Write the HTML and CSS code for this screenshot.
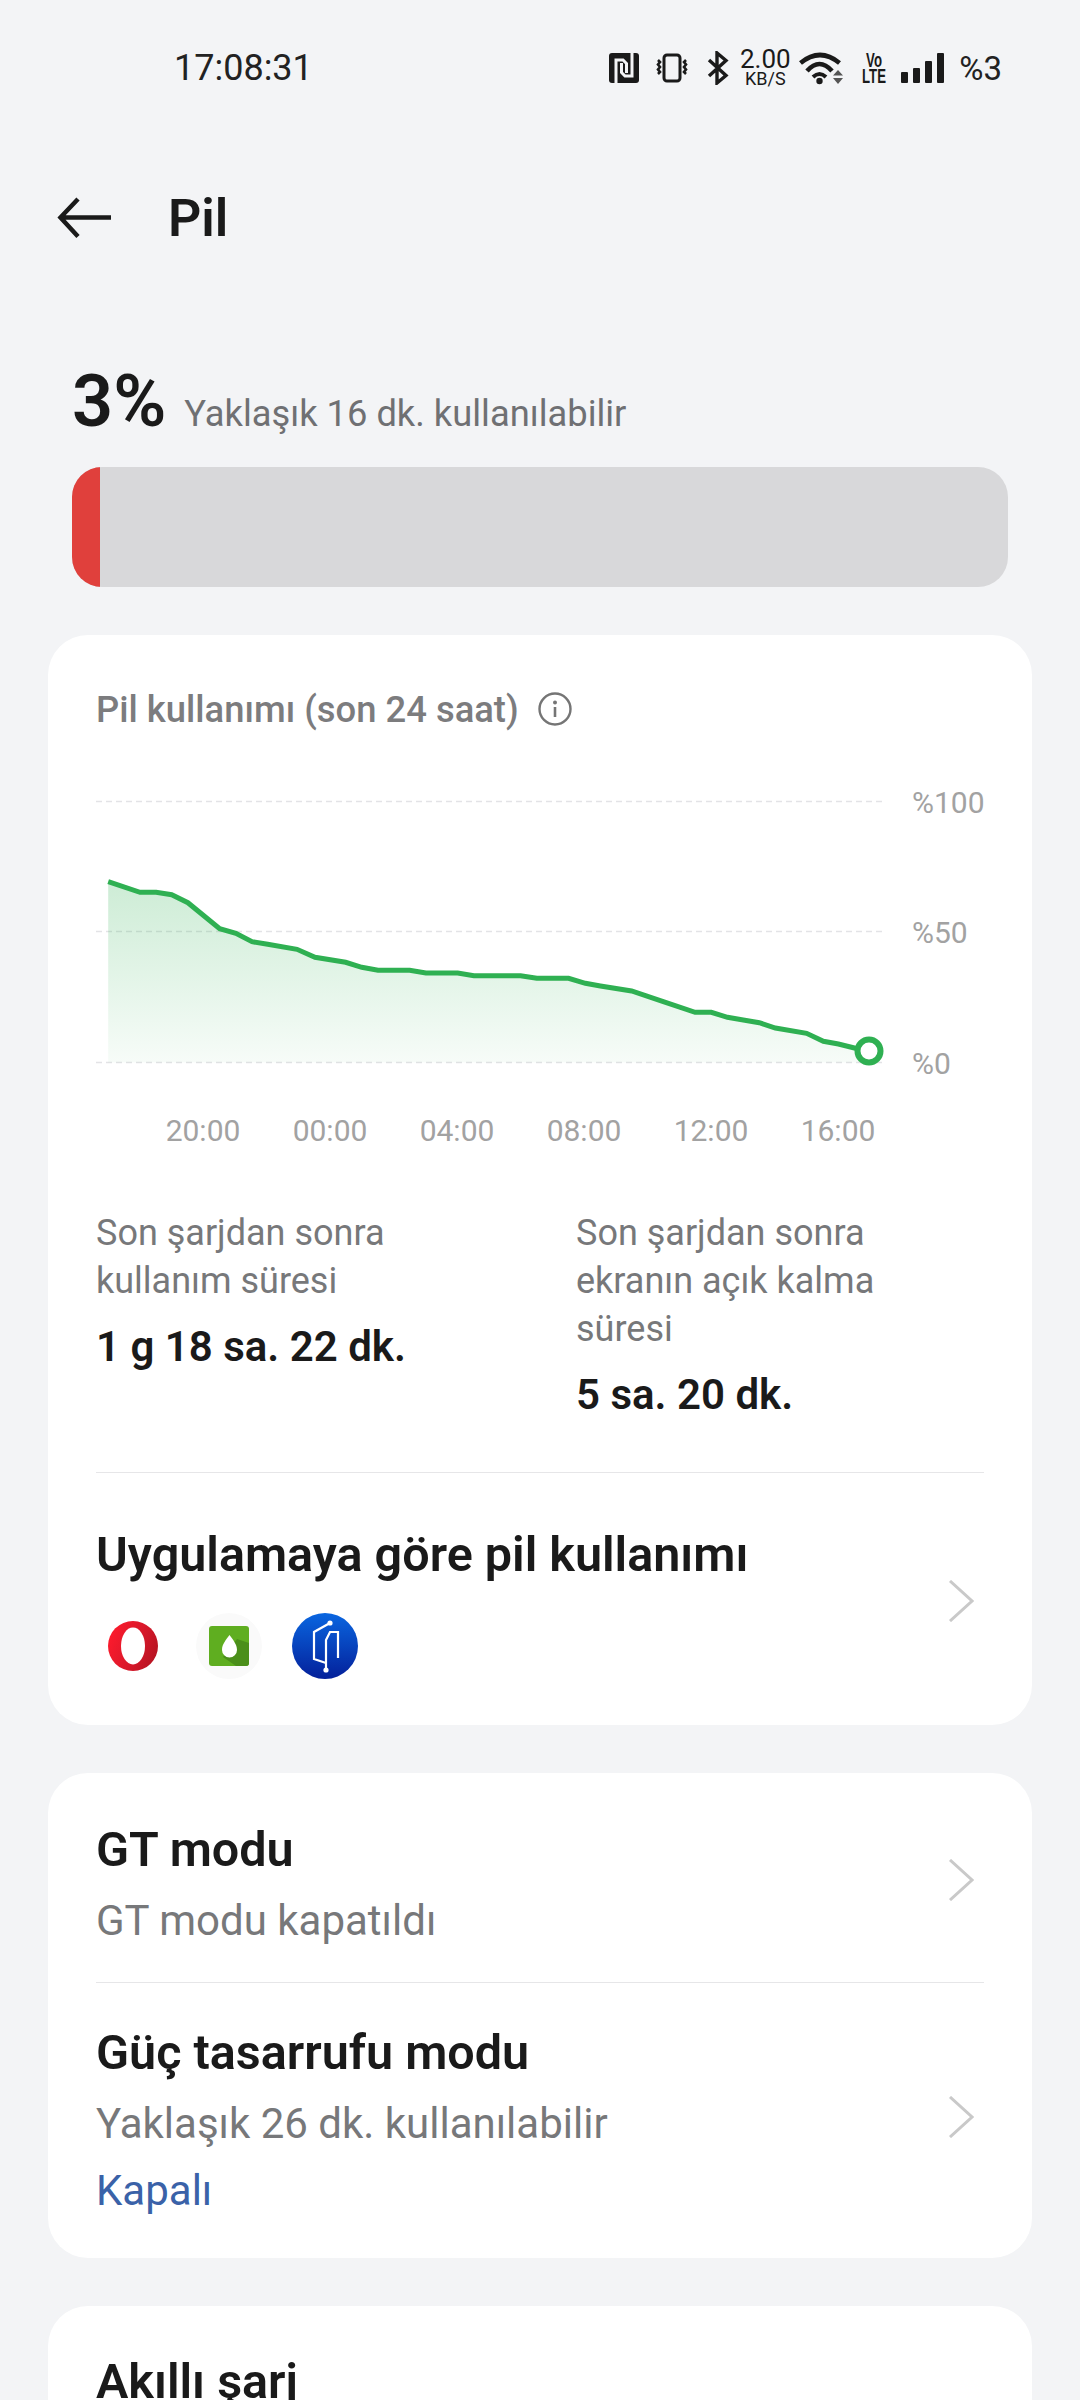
FILE: index.html
```html
<!DOCTYPE html>
<html lang="tr">
<head>
    <meta charset="UTF-8">
    <meta name="viewport" content="width=device-width, initial-scale=1.0">
    <title>Pil</title>
    <link rel="stylesheet" href="styles.css">
</head>
<body>
    <div class="status-bar">
        <div class="clock">17:08:31</div>
        <div class="status-icons">
            <svg class="ic-nfc" width="30" height="30" viewBox="0 0 30 30">
                <rect width="30" height="30" rx="3" fill="#1a1a1a"/>
                <path d="M7 30V7h7l3.500 3.500V20" fill="none" stroke="#f3f4f6" stroke-width="3"/>
                <path d="M23 0V23h-7l-3.500-3.500V10" fill="none" stroke="#f3f4f6" stroke-width="3"/>
            </svg>
            <svg class="ic-vibrate" width="32" height="30" viewBox="0 0 32 30">
                <rect x="8" y="2" width="16" height="26" rx="3" fill="none" stroke="#1a1a1a" stroke-width="3"/>
                <path d="M2 7l2 2-2 2.500 2 2.500-2 2.500 2 2.500-2 2" fill="none" stroke="#1a1a1a" stroke-width="2.600"/>
                <path d="M30 7l-2 2 2 2.500-2 2.500 2 2.500-2 2.500 2 2" fill="none" stroke="#1a1a1a" stroke-width="2.600"/>
            </svg>
            <svg class="ic-bt" width="22" height="34" viewBox="0 0 22 34">
                <path d="M2 9l17 15.500L10 32V2l9 7.500L2 25" fill="none" stroke="#1a1a1a" stroke-width="3.400"/>
            </svg>
            <div class="net-speed">
                <span class="net-num">2.00</span>
                <span class="net-unit">KB/S</span>
            </div>
            <svg class="ic-wifi" width="46" height="34" viewBox="0 0 46 34">
                <path d="M1.500 12Q21-4 40.500 12" fill="none" stroke="#1a1a1a" stroke-width="4.600"/>
                <path d="M8 20Q20.500 6 33 20" fill="none" stroke="#1a1a1a" stroke-width="4.600"/>
                <path d="M14 26Q20.500 20 27 26" fill="none" stroke="#1a1a1a" stroke-width="4"/>
                <circle cx="20.500" cy="30" r="3.200" fill="#1a1a1a"/>
                <path d="M39 19l-5 5.500h10zM34 27l5 6 5-6z" fill="#555"/>
            </svg>
            <div class="volte"><span>Vo</span><span>LTE</span></div>
            <svg class="ic-signal" width="43" height="30" viewBox="0 0 43 30">
                <rect x="0" y="19" width="7" height="11" rx="1" fill="#1a1a1a"/>
                <rect x="12" y="15" width="7" height="15" rx="1" fill="#1a1a1a"/>
                <rect x="24" y="8" width="7" height="22" rx="1" fill="#1a1a1a"/>
                <rect x="36" y="0" width="7" height="30" rx="1" fill="#1a1a1a"/>
            </svg>
            <div class="batt-text">%3</div>
        </div>
    </div>

    <div class="header">
        <svg class="back" width="56" height="42" viewBox="0 0 56 42">
            <path d="M54 20.500H4M21 2L3.500 20.500 21 39.500" fill="none" stroke="#1a1a1a" stroke-width="4.500"/>
        </svg>
        <div class="page-title">Pil</div>
    </div>

    <div class="battery">
        <div class="battery-row">
            <span class="battery-pct">3%</span>
            <span class="battery-left">Yaklaşık 16 dk. kullanılabilir</span>
        </div>
        <div class="battery-bar"><div class="battery-fill"></div></div>
    </div>

    <div class="card usage-card">
        <div class="usage-title">
            <span>Pil kullanımı (son 24 saat)</span>
            <svg width="34" height="34" viewBox="0 0 34 34">
                <circle cx="17" cy="17" r="15.500" fill="none" stroke="#757575" stroke-width="2.400"/>
                <circle cx="17" cy="10.500" r="2" fill="#757575"/>
                <path d="M17 15v10" stroke="#757575" stroke-width="2.600"/>
            </svg>
        </div>

        <!-- chart coords are screen px minus (96, 780) -->
        <svg class="chart" width="900" height="370" viewBox="0 0 900 370">
            <defs>
                <linearGradient id="areaFade" x1="0" y1="0" x2="0" y2="1">
                    <stop offset="0" stop-color="#2fb052" stop-opacity="0.24"/>
                    <stop offset="1" stop-color="#2fb052" stop-opacity="0.04"/>
                </linearGradient>
            </defs>
            <path class="grid-line" d="M0 21.500H787M0 151.500H787M0 282.500H787"/>
            <path fill="url(#areaFade)" d="M12.200 101.700L44 112.300L60.100 112.300L75.700 114.700L91.900 122.700L123.700 148.700L139.900 153.300L156 161.700L171.700 164.300L201 169.300L219 177.300L249.600 182.300L265.800 187.300L282 190.300L313.700 190.300L329.900 193L361.700 193L377.900 195.700L424.600 195.700L440.800 198.300L472.600 198.300L489.400 203.300L504.400 206L535.600 211L567.300 221.700L599.100 232.300L615.300 232.300L631.500 237.300L663.300 242.700L679.400 248L710.600 253.300L727.400 261.300L742.400 264L773.600 271.700V282.500H12.200Z"/>
            <path class="chart-line" d="M12.200 101.700L44 112.300L60.100 112.300L75.700 114.700L91.900 122.700L123.700 148.700L139.900 153.300L156 161.700L171.700 164.300L201 169.300L219 177.300L249.600 182.300L265.800 187.300L282 190.300L313.700 190.300L329.900 193L361.700 193L377.900 195.700L424.600 195.700L440.800 198.300L472.600 198.300L489.400 203.300L504.400 206L535.600 211L567.300 221.700L599.100 232.300L615.300 232.300L631.500 237.300L663.300 242.700L679.400 248L710.600 253.300L727.400 261.300L742.400 264L773.600 271.700"/>
            <circle class="chart-dot" cx="773" cy="271" r="11.500"/>
            <text class="axis-label" x="816" y="33">%100</text>
            <text class="axis-label" x="816" y="163">%50</text>
            <text class="axis-label" x="816" y="294">%0</text>
            <text class="axis-label mid" x="107" y="361">20:00</text>
            <text class="axis-label mid" x="234" y="361">00:00</text>
            <text class="axis-label mid" x="361" y="361">04:00</text>
            <text class="axis-label mid" x="488" y="361">08:00</text>
            <text class="axis-label mid" x="615" y="361">12:00</text>
            <text class="axis-label mid" x="742" y="361">16:00</text>
        </svg>

        <div class="stats">
            <div class="stat">
                <div class="stat-label">Son şarjdan sonra kullanım süresi</div>
                <div class="stat-value">1 g 18 sa. 22 dk.</div>
            </div>
            <div class="stat">
                <div class="stat-label">Son şarjdan sonra ekranın açık kalma süresi</div>
                <div class="stat-value">5 sa. 20 dk.</div>
            </div>
        </div>

        <div class="app-row">
            <div class="app-row-main">
                <div class="item-title">Uygulamaya göre pil kullanımı</div>
                <div class="app-icons">
                    <svg width="66" height="66" viewBox="0 0 66 66">
                        <defs>
                            <linearGradient id="operaRed" x1="0" y1="0.2" x2="1" y2="0.6">
                                <stop offset="0" stop-color="#ff1b2d"/>
                                <stop offset="0.6" stop-color="#d8182a"/>
                                <stop offset="1" stop-color="#b81422"/>
                            </linearGradient>
                        </defs>
                        <circle cx="33" cy="33" r="25" fill="url(#operaRed)"/>
                        <ellipse cx="33" cy="33" rx="12" ry="18.500" fill="#fff"/>
                    </svg>
                    <svg width="66" height="66" viewBox="0 0 66 66">
                        <circle cx="33" cy="33" r="33" fill="#fafafa"/>
                        <rect x="13" y="13" width="40" height="40" rx="3" fill="#5fae20"/>
                        <path d="M41 26L53 30V50a3 3 0 0 1-3 3H40L27 44Z" fill="#4b8f1a"/>
                        <path d="M33.500 22c3.500 5 7.500 9 7.500 15a7.500 7.500 0 0 1-15 0c0-6 4-10 7.500-15Z" fill="#fff"/>
                    </svg>
                    <svg width="66" height="66" viewBox="0 0 66 66">
                        <defs>
                            <linearGradient id="appBlue" x1="0" y1="0" x2="0" y2="1">
                                <stop offset="0" stop-color="#0a66e0"/>
                                <stop offset="1" stop-color="#04209a"/>
                            </linearGradient>
                        </defs>
                        <circle cx="33" cy="33" r="33" fill="url(#appBlue)"/>
                        <path d="M38 10L22 19V46L34 50" fill="none" stroke="#fff" stroke-width="2.200"/>
                        <path d="M34 57V27L38 19H46V45" fill="none" stroke="#fff" stroke-width="2.200"/>
                        <circle cx="38" cy="10" r="2.600" fill="#fff"/>
                        <circle cx="34" cy="57" r="2.600" fill="#fff"/>
                    </svg>
                </div>
            </div>
            <svg class="chevron" width="26" height="42" viewBox="0 0 26 42"><path d="M2 1l22 20L2 41" fill="none" stroke="#c9c9c9" stroke-width="3"/></svg>
        </div>
    </div>

    <div class="card mode-card">
        <div class="mode-row first">
            <div class="mode-text">
                <div class="item-title">GT modu</div>
                <div class="item-sub">GT modu kapatıldı</div>
            </div>
            <svg class="chevron" width="26" height="42" viewBox="0 0 26 42"><path d="M2 1l22 20L2 41" fill="none" stroke="#c9c9c9" stroke-width="3"/></svg>
        </div>
        <div class="mode-row">
            <div class="mode-text">
                <div class="item-title">Güç tasarrufu modu</div>
                <div class="item-sub">Yaklaşık 26 dk. kullanılabilir</div>
                <div class="item-state">Kapalı</div>
            </div>
            <svg class="chevron" width="26" height="42" viewBox="0 0 26 42"><path d="M2 1l22 20L2 41" fill="none" stroke="#c9c9c9" stroke-width="3"/></svg>
        </div>
    </div>

    <div class="card last-card">
        <div class="item-title">Akıllı şarj</div>
    </div>
</body>
</html>
```

FILE: styles.css
```css
html, body {
    margin: 0;
    padding: 0;
}

body {
    width: 1080px;
    height: 2400px;
    overflow: hidden;
    background-color: #f3f4f6;
    font-family: Roboto, "Noto Sans", sans-serif;
    color: #1a1a1a;
}

.status-bar {
    height: 136px;
    display: flex;
    align-items: center;
    justify-content: space-between;
    padding: 0 78px 0 174px;
    box-sizing: border-box;
}

.clock {
    font-size: 36px;
    color: #222;
}

.status-icons {
    display: flex;
    align-items: center;
}

.ic-vibrate {
    margin-left: 17px;
}

.ic-bt {
    margin-left: 19px;
}

.net-speed {
    margin-left: 10px;
    width: 52px;
    display: flex;
    flex-direction: column;
    align-items: center;
}

.net-num {
    font-size: 26px;
    height: 22px;
    line-height: 22px;
}

.net-unit {
    font-size: 18px;
    line-height: 18px;
}

.ic-wifi {
    margin-left: 8px;
}

.volte {
    margin-left: 17px;
    width: 24px;
    display: flex;
    flex-direction: column;
    align-items: center;
    font-size: 20px;
    font-weight: 700;
    line-height: 16px;
    font-family: "Liberation Sans", sans-serif;
    transform: scaleX(0.66);
}

.ic-signal {
    margin-left: 15px;
}

.batt-text {
    margin-left: 15px;
    font-size: 33px;
    color: #222;
}

.header {
    height: 164px;
    display: flex;
    align-items: center;
    padding-left: 57px;
}

.back {
    margin-right: 55px;
}

.page-title {
    font-size: 52px;
    font-weight: 600;
}

.battery {
    padding: 0 72px;
}

.battery-row {
    height: 167px;
    box-sizing: border-box;
    display: flex;
    align-items: baseline;
    gap: 18px;
    padding-top: 60px;
}

.battery-pct {
    font-size: 72px;
    font-weight: 600;
    line-height: 84px;
}

.battery-left {
    font-size: 36.300px;
    color: #6f7073;
}

.battery-bar {
    height: 120px;
    border-radius: 30px;
    overflow: hidden;
    background-color: #d8d8da;
}

.battery-fill {
    width: 28px;
    height: 100%;
    background-color: #e0403c;
}

.card {
    margin: 0 48px 48px;
    background-color: #fff;
    border-radius: 40px;
    padding: 0 48px;
}

.battery + .card {
    margin-top: 48px;
}

.usage-card {
    height: 1090px;
    box-sizing: border-box;
    padding-top: 53px;
}

.usage-title {
    display: flex;
    align-items: center;
    gap: 19px;
    height: 42px;
    font-size: 36.400px;
    font-weight: 500;
    color: #7c7c7e;
}

.chart {
    display: block;
    margin-top: 50px;
}

.grid-line {
    fill: none;
    stroke: #e3e3e6;
    stroke-width: 1.500;
    stroke-dasharray: 6 4;
}

.chart-line {
    fill: none;
    stroke: #2fb052;
    stroke-width: 5;
}

.chart-dot {
    fill: #fff;
    stroke: #2fb052;
    stroke-width: 6;
}

.axis-label {
    font-size: 30px;
    fill: #a2a2a2;
}

.axis-label.mid {
    text-anchor: middle;
}

.stats {
    display: flex;
    margin-top: 59px;
    padding-bottom: 53px;
    border-bottom: 1px solid #e6e6e8;
}

.stat {
    flex: 0 0 480px;
    box-sizing: border-box;
    padding-right: 80px;
}

.stat + .stat {
    flex: 0 0 408px;
    padding-right: 60px;
}

.stat-label {
    font-size: 36px;
    line-height: 48px;
    color: #77787a;
}

.stat-value {
    margin-top: 18px;
    font-size: 42px;
    font-weight: 600;
    line-height: 48px;
}

.app-row {
    display: flex;
    align-items: center;
    justify-content: space-between;
    padding-top: 55px;
}

.app-row .chevron {
    margin-bottom: 6px;
}

.item-title {
    font-size: 48.500px;
    font-weight: 600;
    line-height: 54px;
}

.app-icons {
    display: flex;
    gap: 30px;
    margin-top: 31px;
    margin-left: 4px;
}

.chevron {
    margin-right: 10px;
    flex-shrink: 0;
}

.mode-card {
    height: 485px;
    box-sizing: border-box;
}

.mode-row {
    display: flex;
    align-items: center;
    justify-content: space-between;
    padding-top: 43px;
}

.mode-row .chevron {
    margin-bottom: 10px;
}

.mode-row.first {
    padding-top: 50px;
    padding-bottom: 35px;
    border-bottom: 1px solid #e6e6e8;
}

.item-sub {
    font-size: 42px;
    line-height: 52px;
    margin-top: 18px;
    color: #77787a;
}

.item-state {
    font-size: 42px;
    line-height: 52px;
    margin-top: 15px;
    color: #3a62a8;
}

.last-card {
    height: 94px;
    margin-bottom: 0;
    padding-top: 49px;
    box-sizing: border-box;
    overflow: hidden;
    border-bottom-left-radius: 0;
    border-bottom-right-radius: 0;
}
```
